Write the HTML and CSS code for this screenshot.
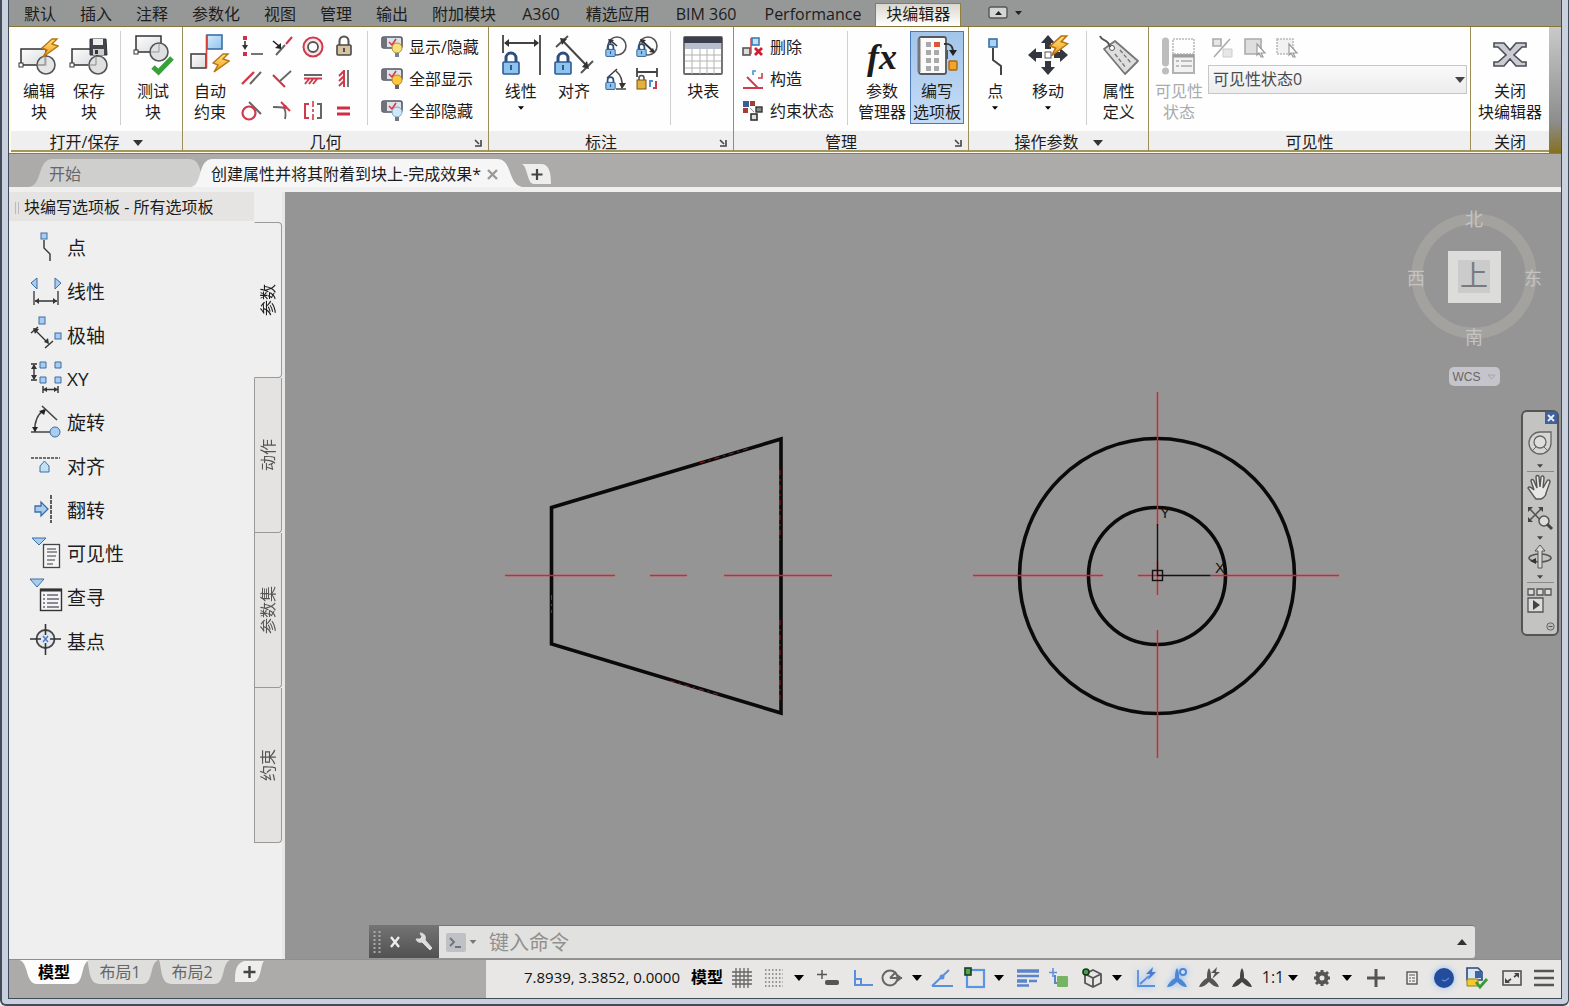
FILE: index.html
```html
<!DOCTYPE html>
<html lang="zh-CN">
<head>
<meta charset="utf-8">
<title>块编辑器</title>
<link rel="stylesheet" href="styles.css">
</head>
<body>
<svg class="defs" width="0" height="0" aria-hidden="true">
  <defs>
    <linearGradient id="gBolt" x1="0" y1="0" x2="0" y2="1"><stop offset="0" stop-color="#ffe27a"/><stop offset="1" stop-color="#f39a1e"/></linearGradient>
    <linearGradient id="gBox" x1="0" y1="0" x2="1" y2="1"><stop offset="0" stop-color="#fdfdfd"/><stop offset="1" stop-color="#d9dbde"/></linearGradient>
    <linearGradient id="gBlue" x1="0" y1="0" x2="1" y2="1"><stop offset="0" stop-color="#d5ecfb"/><stop offset="1" stop-color="#8fc3ee"/></linearGradient>
    <symbol id="bolt" viewBox="0 0 18 20"><path d="M11 1 1 10l5 2-4 7L17 8l-6-2 5-5z" fill="url(#gBolt)" stroke="#b87412" stroke-width="1.4"/></symbol>
    <symbol id="lock" viewBox="0 0 18 24"><path d="M4 12V7a5 5 0 0 1 10 0v5" fill="none" stroke="#2d4e7e" stroke-width="3"/><rect x="1" y="11" width="16" height="12" rx="1" fill="#8cc4ee" stroke="#2d5a94" stroke-width="1.6"/><path d="M9 14v5" stroke="#2d5a94" stroke-width="2"/></symbol>
    <symbol id="vis" viewBox="0 0 22 22"><rect x="1" y="1" width="20" height="11" rx="2" fill="#dfe2e8" stroke="#50555e" stroke-width="1.6"/><path d="M1 3a2 2 0 0 1 2-2h3v11H3a2 2 0 0 1-2-2z" fill="#6d727c"/><path d="m8 6 3 3 4-6" fill="none" stroke="#cf3c48" stroke-width="1.6"/></symbol>
    <symbol id="caret" viewBox="0 0 10 6"><path d="M0 0h10L5 6z"/></symbol>
    <symbol id="launch" viewBox="0 0 8 8"><path d="M1 1l4 4M7 1v6H1" fill="none" stroke="#444" stroke-width="1.6"/></symbol>
    <symbol id="person" viewBox="0 0 20 22"><path d="M10 1c2 3 2 6 2 10 4 2 7 6 8 9-4 0-7-2-10-5-3 3-6 5-10 5 1-3 4-7 8-9 0-4 0-7 2-10z"/></symbol>
  </defs>
</svg>

<div class="window">
<div class="app">

<nav class="menu">
  <button>默认</button><button>插入</button><button>注释</button><button>参数化</button><button>视图</button><button>管理</button><button>输出</button><button>附加模块</button><button class="latin">A360</button><button>精选应用</button><button class="latin">BIM 360</button><button class="latin">Performance</button><button class="active">块编辑器</button>
  <button class="collapse" aria-label="最小化功能区">
    <svg width="33" height="12" viewBox="0 0 33 12"><rect x="0" y="0" width="18" height="11" rx="2" fill="#d5d5d5" stroke="#555" stroke-width="1.4"/><path d="M6 8h7L9.500 4z" fill="#222"/><path d="M26 4h7l-3.500 4z" fill="#222"/></svg>
  </button>
</nav>

<div class="ribbon">
  <section class="panel p-open">
    <div class="body">
      <button class="big"><span class="pic"><svg width="44" height="44" viewBox="0 0 44 44"><rect x="4" y="14" width="25" height="16" fill="url(#gBox)" stroke="#333" stroke-width="1.5"/><rect x="2" y="28" width="4" height="4" fill="#fff" stroke="#333"/><circle cx="29" cy="30" r="9" fill="#dfe0e2" fill-opacity=".8" stroke="#555" stroke-width="1.6"/><path d="M28 21v9h-8" fill="none" stroke="#888"/><use href="#bolt" x="24" y="3" width="18" height="20"/></svg></span>编辑<br>块</button>
      <button class="big"><span class="pic"><svg width="44" height="44" viewBox="0 0 44 44"><rect x="5" y="14" width="25" height="16" fill="url(#gBox)" stroke="#333" stroke-width="1.5"/><rect x="3" y="28" width="4" height="4" fill="#fff" stroke="#333"/><circle cx="31" cy="30" r="9" fill="#dfe0e2" stroke="#555" stroke-width="1.6"/><path d="M29 21v9h-8" fill="none" stroke="#888"/><path d="M23 4h16l1 16H23z" fill="#42454d" stroke="#2e3138"/><rect x="26" y="4" width="10" height="6" fill="#eee"/><rect x="26" y="14" width="11" height="6" fill="#ccc"/><rect x="28" y="15" width="3" height="4" fill="#333"/></svg></span>保存<br>块</button>
      <i class="sep"></i>
      <button class="big"><span class="pic"><svg width="44" height="44" viewBox="0 0 44 44"><rect x="5" y="1" width="25" height="16" fill="url(#gBox)" stroke="#333" stroke-width="1.5"/><rect x="3" y="15" width="4" height="4" fill="#fff" stroke="#333"/><circle cx="28" cy="17" r="9" fill="#dfe0e2" stroke="#555" stroke-width="1.6"/><path d="m28 9v8h-8" fill="none" stroke="#999"/><path d="M22 32l5.500 5L41 23" fill="none" stroke="#36a13a" stroke-width="5"/></svg></span>测试<br>块</button>
    </div>
    <h2>打开/保存<svg class="more" width="10" height="6"><use href="#caret"/></svg></h2>
  </section>

  <section class="panel p-geo">
    <div class="body">
      <button class="big"><span class="pic"><svg width="44" height="44" viewBox="0 0 44 44"><rect x="3" y="19" width="15" height="14" fill="url(#gBox)" stroke="#444" stroke-width="1.6"/><rect x="19" y="0" width="15" height="14" fill="url(#gBlue)" stroke="#3c6ea5" stroke-width="1.6"/><path d="M18.500 0v33" stroke="#d2413a" stroke-width="1.6"/><use href="#bolt" x="24" y="18" width="18" height="20"/></svg></span>自动<br>约束</button>
      <div class="icons four">
        <button aria-label="重合"><svg width="24" height="24" viewBox="0 0 24 24"><path d="M4 1h4v4H4zM4 17h4v4H4z" fill="#d03048"/><path d="M12 19h12" stroke="#666" stroke-width="1.8"/><path d="M6 6v5" stroke="#333" stroke-width="1.6"/><path d="M3 10h6l-3 5z" fill="#333"/></svg></button>
        <button aria-label="共线"><svg width="24" height="24" viewBox="0 0 24 24"><path d="m6 20 9-10" stroke="#666" stroke-width="2"/><path d="m16 9 6-7" stroke="#d03048" stroke-width="2"/><path d="m3 6 6 5" stroke="#222" stroke-width="1.6"/><path d="m11 8v6l-6-1z" fill="#222"/></svg></button>
        <button aria-label="同心"><svg width="24" height="24" viewBox="0 0 24 24"><circle cx="12" cy="12" r="9.500" fill="#fbe6e8" stroke="#cf3b4b" stroke-width="2"/><circle cx="12" cy="12" r="5" fill="#fff" stroke="#555" stroke-width="1.8"/></svg></button>
        <button aria-label="固定"><svg width="24" height="24" viewBox="0 0 24 24"><path d="M7.500 10V6a4.500 4.500 0 0 1 9 0v4" fill="none" stroke="#555" stroke-width="2"/><rect x="5" y="10" width="14" height="10" rx="1" fill="#d7c3a0" stroke="#4a4a4a" stroke-width="1.6"/><path d="M12 13v4" stroke="#333" stroke-width="1.6"/></svg></button>
        <button aria-label="平行"><svg width="24" height="24" viewBox="0 0 24 24"><path d="M3 17 15 5" stroke="#cf3b4b" stroke-width="2.4"/><path d="M11 17 22 5" stroke="#666" stroke-width="2"/></svg></button>
        <button aria-label="垂直"><svg width="24" height="24" viewBox="0 0 24 24"><path d="m3 8 12 12" stroke="#cf3b4b" stroke-width="2.2"/><path d="M10 14 21 4" stroke="#666" stroke-width="1.8"/></svg></button>
        <button aria-label="水平"><svg width="24" height="24" viewBox="0 0 24 24"><path d="M3 8h18" stroke="#666" stroke-width="2"/><path d="M3 11.500h18M8 12l-4 5m8-5-4 5m8-5-4 5" stroke="#cf3b4b" stroke-width="2"/></svg></button>
        <button aria-label="竖直"><svg width="24" height="24" viewBox="0 0 24 24"><path d="M16 3v17" stroke="#666" stroke-width="1.8"/><path d="M12 3v17M12 4l-5 5m5 0-5 5m5 0-5 5" stroke="#cf3b4b" stroke-width="2"/></svg></button>
        <button aria-label="相切"><svg width="24" height="24" viewBox="0 0 24 24"><path d="m10 3 12 12" stroke="#666" stroke-width="2"/><circle cx="10" cy="14" r="6.500" fill="none" stroke="#cf3b4b" stroke-width="2.2"/></svg></button>
        <button aria-label="平滑"><svg width="24" height="24" viewBox="0 0 24 24"><path d="M3 8c4 0 8 0 11 1 2 3 2 6 1 11" fill="none" stroke="#666" stroke-width="1.8"/><path d="m11 3 9 9" stroke="#cf3b4b" stroke-width="2"/><circle cx="15" cy="8" r="2" fill="#cf3b4b"/></svg></button>
        <button aria-label="对称"><svg width="24" height="24" viewBox="0 0 24 24"><path d="M8 5H4v14h4" fill="none" stroke="#cf3b4b" stroke-width="2"/><path d="M16 5h4v14h-4" fill="none" stroke="#666" stroke-width="2"/><path d="M12 2v20" stroke="#cf3b4b" stroke-width="1.6" stroke-dasharray="6 2 3 2"/></svg></button>
        <button aria-label="相等"><svg width="24" height="24" viewBox="0 0 24 24"><path d="M5 9h13M5 15h13" stroke="#cf2f45" stroke-width="3"/></svg></button>
      </div>
      <i class="sep"></i>
      <div class="rows">
        <button><svg width="22" height="22" viewBox="0 0 22 22"><use href="#vis"/><circle cx="16" cy="12" r="5" fill="#f8e07c" stroke="#b09136"/><path d="M14 17h4v4h-4z" fill="#70839e"/></svg>显示/隐藏</button>
        <button><svg width="22" height="22" viewBox="0 0 22 22"><use href="#vis"/><circle cx="16" cy="12" r="5" fill="#fcc83c" stroke="#b9862a"/><path d="M14 17h4v4h-4z" fill="#666"/></svg>全部显示</button>
        <button><svg width="22" height="22" viewBox="0 0 22 22"><use href="#vis"/><circle cx="16" cy="12" r="5" fill="#cfe7f8" stroke="#7fa6c9"/><path d="M14 17h4v4h-4z" fill="#777"/></svg>全部隐藏</button>
      </div>
    </div>
    <h2 class="has-launch"><span>几何</span><button aria-label="约束设置"><svg width="8" height="8"><use href="#launch"/></svg></button></h2>
  </section>

  <section class="panel p-dim">
    <div class="body">
      <button class="big"><span class="pic"><svg width="44" height="44" viewBox="0 0 44 44"><path d="M4 0v18M41 0v40" stroke="#555" stroke-width="2"/><path d="M6 8h33" stroke="#444" stroke-width="2"/><path d="m5 8 5-4v8zM40 8l-5-4v8z" fill="#333"/><use href="#lock" x="3" y="16" width="18" height="24"/></svg></span>线性<svg class="drop" width="6" height="4"><use href="#caret" width="6" height="4"/></svg></button>
      <button class="big one-line"><span class="pic"><svg width="44" height="44" viewBox="0 0 44 44"><path d="M4 12 16 1M29 38l12-12" stroke="#555" stroke-width="2"/><path d="m10 5 25 26" stroke="#444" stroke-width="2"/><path d="m8 3 7 1-5 6zM37 34l-7-2 5-6z" fill="#333"/><use href="#lock" x="2" y="16" width="18" height="24"/></svg></span>对齐</button>
      <div class="icons two">
        <button aria-label="半径"><svg width="24" height="24" viewBox="0 0 24 24"><circle cx="13" cy="11" r="9" fill="none" stroke="#555" stroke-width="1.6"/><path d="m13 11-7-6" stroke="#333" stroke-width="1.6"/><path d="m4 4 6 1-4 4z" fill="#333"/><use href="#lock" x="1" y="8" width="11" height="14"/></svg></button>
        <button aria-label="直径"><svg width="24" height="24" viewBox="0 0 24 24"><circle cx="13" cy="11" r="9" fill="none" stroke="#555" stroke-width="1.6"/><path d="M6 5l13 12" stroke="#333" stroke-width="1.8"/><path d="m5 4 6 1-4 4zM20 18l-6-1 4-4z" fill="#333"/><use href="#lock" x="1" y="8" width="11" height="14"/></svg></button>
        <button aria-label="角度"><svg width="24" height="24" viewBox="0 0 24 24"><path d="m3 11 10-9M12 22h10M12 4c5 4 7 9 6 17" fill="none" stroke="#444" stroke-width="1.6"/><path d="m15 16h7l-4 6z" fill="#333"/><use href="#lock" x="1" y="9" width="11" height="14"/></svg></button>
        <button aria-label="转换"><svg width="24" height="24" viewBox="0 0 24 24"><path d="M2 1v9M22 1v9M2 5h20" stroke="#444" stroke-width="1.8"/><path d="M4 13v-2a2.500 2.500 0 0 1 5 0v2" fill="none" stroke="#555" stroke-width="1.6"/><rect x="2" y="13" width="9" height="9" fill="#e3b13c" stroke="#775715"/><path d="M15 20v-6h3" fill="none" stroke="#4b90d0" stroke-width="2"/><path d="M18 21h3v-7" fill="none" stroke="#cf3b4b" stroke-width="2"/></svg></button>
      </div>
      <i class="sep"></i>
      <button class="big one-line"><span class="pic"><svg width="44" height="44" viewBox="0 0 44 44"><rect x="3" y="2" width="38" height="37" rx="1" fill="#fff" stroke="#686868" stroke-width="1.8"/><path d="M3 2h38v6H3z" fill="#3b3f4d"/><path d="M4 8h36v6H4z" fill="#b7bfcc"/><path d="M11 14v25m8-25v25m7-25v25m7-25v25M4 20h36M4 26h36M4 33h36" stroke="#b3b3b3"/></svg></span>块表</button>
    </div>
    <h2 class="has-launch"><span>标注</span><button aria-label="标注设置"><svg width="8" height="8"><use href="#launch"/></svg></button></h2>
  </section>

  <section class="panel p-manage">
    <div class="body">
      <div class="rows">
        <button><svg width="22" height="22" viewBox="0 0 22 22"><rect x="1" y="12" width="7" height="7" fill="#ddd" stroke="#555" stroke-width="1.6"/><rect x="10" y="2" width="7" height="7" fill="#bfe0f5" stroke="#3c7fb5" stroke-width="1.6"/><path d="M9 2v16" stroke="#cf3b4b" stroke-width="1.4"/><path d="m13 12 7 7m0-7-7 7" stroke="#cc1f30" stroke-width="2.800"/></svg>删除</button>
        <button><svg width="22" height="22" viewBox="0 0 22 22"><path d="M1 20h20M5 9l11 11" stroke="#cf3b4b" stroke-width="1.8"/><path d="M11 7V3h3" fill="none" stroke="#4b90d0" stroke-width="1.6"/><path d="M16 10h4V5" fill="none" stroke="#cf3b4b" stroke-width="1.6"/></svg>构造</button>
        <button><svg width="22" height="22" viewBox="0 0 22 22"><path d="M1 1h6v6H1z" fill="#3a5d96"/><path d="M8 1h5v5H8zM1 8h5v5H1z" fill="#a04035"/><path d="M8 8l4 4" stroke="#999"/><rect x="14" y="7" width="6" height="5" fill="#888" stroke="#333" stroke-width="1.4"/><rect x="9" y="14" width="6" height="6" fill="#ddd" stroke="#333" stroke-width="1.6"/></svg>约束状态</button>
      </div>
      <i class="sep"></i>
      <button class="big"><span class="pic fx">fx</span>参数<br>管理器</button>
      <button class="big selected"><span class="pic"><svg width="44" height="44" viewBox="0 0 44 44"><path d="M30 15h3v9h-3" fill="#555"/><rect x="4" y="2" width="27" height="37" rx="2" fill="#fafafa" stroke="#55585e" stroke-width="1.8"/><path d="M4 4v33" stroke="#777" stroke-width="3"/><path d="M11 7h5v5h-5zM11 15h5v5h-5zM11 23h5v5h-5zM11 31h5v5h-5zM19 15h5v5h-5zM19 23h5v5h-5zM19 31h5v5h-5z" fill="#a9a9a9"/><path d="M19 7h6v5h-6z" fill="#d9583a"/><path d="M29 9c6-1 9 2 9 8" fill="none" stroke="#333" stroke-width="1.8"/><path d="m34 15h8l-4 6z" fill="#222"/><rect x="34" y="26" width="8" height="9" rx="1" fill="#f2a52c" stroke="#a8690d" stroke-width="1.4"/></svg></span>编写<br>选项板</button>
    </div>
    <h2 class="has-launch"><span>管理</span><button aria-label="管理设置"><svg width="8" height="8"><use href="#launch"/></svg></button></h2>
  </section>

  <section class="panel p-action">
    <div class="body">
      <button class="big"><span class="pic"><svg width="44" height="44" viewBox="0 0 44 44"><rect x="16" y="4" width="8" height="8" fill="#a9d3f3" stroke="#3970a8" stroke-width="1.6"/><path d="M20 13v12l8 6v9" fill="none" stroke="#444" stroke-width="2"/></svg></span>点<svg class="drop" width="6" height="4"><use href="#caret" width="6" height="4"/></svg></button>
      <button class="big"><span class="pic"><svg width="44" height="44" viewBox="0 0 44 44"><path d="m22 0 7 8h-4v6h-6V8h-4zM22 40l7-8h-4v-6h-6v6h-4zM2 20l8-7v4h6v6h-6v4zM42 20l-8-7v4h-6v6h6v4z" fill="#33363f"/><rect x="19" y="17" width="6" height="6" fill="#fff" stroke="#555"/><use href="#bolt" x="23" y="0" width="20" height="22"/></svg></span>移动<svg class="drop" width="6" height="4"><use href="#caret" width="6" height="4"/></svg></button>
      <i class="sep"></i>
      <button class="big"><span class="pic"><svg width="44" height="44" viewBox="0 0 44 44"><path d="M7 14 18 6l23 20-13 13-16-19z" fill="#dedede" stroke="#777" stroke-width="1.8" stroke-linejoin="round"/><path d="m18 19 11 14m-6-18 11 13" stroke="#777" stroke-width="1.4" stroke-dasharray="4 2"/><circle cx="15" cy="13" r="2.500" fill="#fff" stroke="#555"/><path d="M3 1c2 6 8 2 10 11" fill="none" stroke="#555" stroke-width="2"/></svg></span>属性<br>定义</button>
    </div>
    <h2>操作参数<svg class="more" width="10" height="6"><use href="#caret"/></svg></h2>
  </section>

  <section class="panel p-vis">
    <div class="body">
      <button class="big" disabled><span class="pic"><svg width="44" height="44" viewBox="0 0 44 44"><path d="M5 6a3 3 0 0 1 7 0v22a3 3 0 0 1-7 0z" fill="#bdbdbd"/><circle cx="8.500" cy="36" r="3.500" fill="#bdbdbd"/><rect x="16" y="4" width="21" height="15" fill="none" stroke="#bbb" stroke-width="1.6" stroke-dasharray="2 1"/><rect x="16" y="20" width="21" height="18" fill="#f2f2f2" stroke="#b2b2b2" stroke-width="2"/><path d="M16 21h21" stroke="#9d9d9d" stroke-width="3"/><path d="M19 26h3m2 0h11M19 31h3m2 0h11" stroke="#aaa" stroke-width="1.6"/></svg></span>可见性<br>状态</button>
      <div class="state">
        <div class="state-tools">
          <button disabled aria-label="可见性模式"><svg width="22" height="22" viewBox="0 0 22 22"><path d="M2 2h8v7H2z" fill="#e6e6e6" stroke="#aaa" stroke-width="1.6"/><path d="M3 20 19 2" stroke="#aaa" stroke-width="1.6"/><path d="M12 12h9v8h-9z" fill="#e6e6e6" stroke="#ccc"/></svg></button>
          <button disabled aria-label="使可见"><svg width="22" height="22" viewBox="0 0 22 22"><path d="M2 2h16v15H2z" fill="#dedede" stroke="#aaa" stroke-width="1.6"/><path d="m14 7 8 9h-4l2 4h-2l-2-4-2 2z" fill="#fff" stroke="#999" stroke-width="1.2"/></svg></button>
          <button disabled aria-label="使不可见"><svg width="22" height="22" viewBox="0 0 22 22"><path d="M2 2h16v15H2z" fill="#f2f2f2" stroke="#bbb" stroke-width="1.6" stroke-dasharray="2 1"/><path d="m14 7 8 9h-4l2 4h-2l-2-4-2 2z" fill="#fff" stroke="#999" stroke-width="1.2"/></svg></button>
        </div>
        <div class="combo"><select aria-label="可见性状态"><option>可见性状态0</option></select><svg width="10" height="6"><use href="#caret"/></svg></div>
      </div>
    </div>
    <h2>可见性</h2>
  </section>

  <section class="panel p-close">
    <div class="body">
      <button class="big"><span class="pic"><svg width="44" height="44" viewBox="0 0 44 44"><path d="M6 8h10l6 7 6-7h10v4h-4l-8 8 8 7h4v4H28l-6-7-6 7H6v-4h4l8-7-8-8H6z" fill="#c9ccd2" stroke="#4b4e55" stroke-width="1.6"/></svg></span>关闭<br>块编辑器</button>
    </div>
    <h2>关闭</h2>
  </section>
  <div class="ribbon-end"></div>
</div>

<div class="docs">
  <button class="doc"><svg class="shape" viewBox="0 0 178 28" preserveAspectRatio="none"><path d="M0 28C14 26 8 0 24 0h136c14 0 10 20 18 28z" fill="#cfcfcd"/></svg><span>开始</span></button>
  <button class="doc current"><svg class="shape" viewBox="0 0 332 28" preserveAspectRatio="none"><path d="M0 28C12 26 6 0 22 0h284c16 0 10 26 26 28z" fill="#f6f6f6"/></svg><span>创建属性并将其附着到块上-完成效果*</span><svg class="x" width="11" height="11" viewBox="0 0 11 11"><path d="m1 1 9 9m0-9-9 9" stroke="#999" stroke-width="2.4"/></svg></button>
  <button class="doc-add" aria-label="新图形"><svg width="30" height="22" viewBox="0 0 30 22"><path d="M0 1h19c8 0 10 8 10 20H12C5 21 6 4 0 1z" fill="#eeeeec"/><path d="M15 6v11M9.500 11.500h11" stroke="#444" stroke-width="2.2"/></svg></button>
</div>

<main class="work">
  <aside class="palette">
    <div class="palette-main">
      <h1><svg width="4" height="12" viewBox="0 0 4 12"><path d="M.5 0v12M3.500 0v12" stroke="#bbb"/></svg>块编写选项板 - 所有选项板</h1>
      <div class="params">
        <button><svg width="32" height="32" viewBox="0 0 32 32"><rect x="11" y="0" width="6" height="6" fill="#a8cdef" stroke="#3c6da5"/><path d="M14 7v8l6 6v7" fill="none" stroke="#333" stroke-width="1.4"/></svg>点</button>
        <button><svg width="32" height="32" viewBox="0 0 32 32"><path d="m7 1-6 5 6 6zM25 1l6 5-6 6z" fill="#a8cdef" stroke="#3c6da5"/><path d="M4 14v14M28 14v14M5 24h22" stroke="#333" stroke-width="1.3"/><path d="m5 24 4-3v6zM27 24l-4-3v6z" fill="#333"/></svg>线性</button>
        <button><svg width="32" height="32" viewBox="0 0 32 32"><rect x="9" y="-3" width="6" height="7" fill="#a8cdef" stroke="#3c6da5"/><rect x="25" y="13" width="6" height="6" fill="#a8cdef" stroke="#3c6da5"/><path d="m1 13 7-6m7 21 8-7M4 9l14 14" stroke="#333" stroke-width="1.4"/><path d="m3 8 6 1-4 5zM19 24l-5-2 4-4z" fill="#333"/></svg>极轴</button>
        <button><svg width="32" height="32" viewBox="0 0 32 32"><path d="M10-2h6v6h-6zM25-2h6v6h-6zM10 13h6v6h-6zM25 13h6v6h-6z" fill="#a8cdef" stroke="#3c6da5"/><path d="M1 0h6M1 16h6M4 1v14M13 22v7M28 22v7M13 25.500h15" stroke="#333" stroke-width="1.4"/><path d="m4 0 3 5H1zM4 16l-3-5h6zM13 25.500l4-2.500v5zM28 25.500l-4-2.500v5z" fill="#333"/></svg>XY</button>
        <button><svg width="32" height="32" viewBox="0 0 32 32"><path d="M1 24h20M12-2l15 14M5 24C4 14 8 6 14 2" fill="none" stroke="#444" stroke-width="1.6"/><path d="m9 3 7-2-2 6zM2 19l6 0-3 5z" fill="#222"/><circle cx="25" cy="24" r="5" fill="#a8cdef" stroke="#3c6da5"/></svg>旋转</button>
        <button><svg width="32" height="32" viewBox="0 0 32 32"><path d="M1 7h29" stroke="#444" stroke-width="1.4" stroke-dasharray="3 1"/><path d="M10 21v-6l4.500-5 4.500 5v6z" fill="#bfe0f5" stroke="#3c6da5"/></svg>对齐</button>
        <button><svg width="32" height="32" viewBox="0 0 32 32"><path d="M21 0v28" stroke="#222" stroke-width="1.4" stroke-dasharray="4 1"/><path d="M5 11h6V7l7 7-7 7v-4H5z" fill="#a8cdef" stroke="#3c6da5" stroke-width="1.3"/></svg>翻转</button>
        <button><svg width="32" height="32" viewBox="0 0 32 32"><path d="M2-1h14l-7 7z" fill="#a8cdef" stroke="#3c6da5"/><rect x="13.500" y="5.500" width="16" height="23" fill="#f4f4f6" stroke="#444" stroke-width="1.3"/><path d="M17 10h9m-9 3h10m-10 4h9m-9 4h8m-8 4h6" stroke="#777" stroke-width="1.3"/></svg>可见性</button>
        <button><svg width="32" height="32" viewBox="0 0 32 32"><path d="M0-3h14l-7 8z" fill="#a8cdef" stroke="#3c6da5"/><rect x="10.500" y="7.500" width="21" height="21" fill="#f4f4f6" stroke="#333" stroke-width="1.4"/><path d="M10 8h22" stroke="#333" stroke-width="3"/><path d="M13 13h2m2 0h11m-15 4h2m2 0h12m-16 4h2m2 0h11m-15 4h2m2 0h12" stroke="#667" stroke-width="1.4"/></svg>查寻</button>
        <button><svg width="32" height="32" viewBox="0 0 32 32"><circle cx="15.500" cy="13" r="9" fill="#e4e8ee" stroke="#444" stroke-width="1.8"/><path d="M0 13h11m9 0h11M15.500-2v11m0 8v12" stroke="#333" stroke-width="1.6"/><path d="m13 10 5 6m0-6-5 6" stroke="#447bc0" stroke-width="1.4"/></svg>基点</button>
      </div>
    </div>
    <div class="side-tabs">
      <button class="on"><span>参数</span></button><button><span>动作</span></button><button><span>参数集</span></button><button><span>约束</span></button>
    </div>
  </aside>

  <div class="canvas">
    <svg class="drawing" viewBox="285 192 1276 767" aria-label="块几何图形">
      <g fill="none" stroke="#0a0a0a" stroke-width="3.6">
        <path d="M551.500 507.500 781 439V713L551.500 644z"/>
        <circle cx="1157" cy="576" r="137.500"/>
        <circle cx="1157" cy="576" r="68.500"/>
      </g>
      <g stroke="#e0202c" stroke-width="1.400">
        <path d="M505 575.500h110M650 575.500h37M724 575.500h108M973 575.500h130M1138 575.500h21M1211 575.500h128M1157.500 392v133M1157.500 561v34M1157.500 630v128"/>
        <path d="M551.500 595v18M780 470v70M780 620v80M700 463l50-15M670 681l50 14" stroke-width="1" stroke-dasharray="5 4 2 4" stroke-opacity=".7"/>
      </g>
      <g fill="none" stroke="#111" stroke-width="1.400"><path d="M1157.500 524v51.500h53"/><rect x="1152.500" y="570.500" width="10" height="10"/></g>
      <text x="1160" y="518" class="axis">Y</text><text x="1215" y="573" class="axis">X</text>
    </svg>

    <div class="cube">
      <svg width="140" height="140" viewBox="0 0 140 140">
        <circle cx="70" cy="70" r="57" fill="none" stroke="#a3a29f" stroke-width="11"/>
        <rect x="44" y="45" width="53" height="52" fill="#dcdcdb"/><rect x="54" y="54" width="32" height="33" fill="#cbcbcb"/>
        <text x="70" y="80" class="top">上</text>
        <text x="70" y="20">北</text><text x="70" y="138">南</text><text x="12" y="79">西</text><text x="129" y="79">东</text>
      </svg>
      <button class="wcs">WCS<svg width="9" height="6" viewBox="0 0 9 6"><path d="M1 1h7L4.500 5z" fill="none" stroke="#a4a2ae"/></svg></button>
    </div>

    <div class="navbar">
      <button class="nav-close" aria-label="关闭导航栏"><svg width="12" height="12" viewBox="0 0 12 12"><path d="M0 0h12v12H0z" fill="#41619c"/><path d="m3 3 6 6m0-6-6 6" stroke="#e8eefa" stroke-width="1.8"/></svg></button>
      <button class="wheel" aria-label="导航控制盘"><svg width="24" height="24" viewBox="0 0 24 24"><path d="M12 1h11v11A11 11 0 1 1 12 1z" fill="#d6d6d4" stroke="#666" stroke-width="1.300"/><circle cx="12" cy="11" r="6" fill="#dedede" stroke="#666" stroke-width="1.300"/><path d="m8 16-4 4m12-4 4 4" stroke="#666"/></svg></button>
      <svg class="nc" width="6" height="4"><use href="#caret" width="6" height="4"/></svg>
      <hr>
      <button aria-label="平移"><svg width="24" height="26" viewBox="0 0 24 26"><path d="M8 24C5 21 3 17 0 13c1-2 3-1 6 2L3 6c0-2 2-2 3 0l3 7-1-11c0-2 3-2 3 0l1 10 1-10c1-2 3-1 3 1l-1 10 4-7c1-2 3-1 3 1l-4 11c0 3-3 5-5 6z" fill="#e7e7e5" stroke="#555" stroke-width="1.400"/></svg></button>
      <button aria-label="缩放"><svg width="26" height="24" viewBox="0 0 26 24"><path d="M2 2l13 14M15 2 2 15" stroke="#555" stroke-width="1.600"/><path d="M1 1h5L1 6zM16 1h-5l5 5zM1 16v-5l5 5z" fill="#444"/><circle cx="17" cy="15" r="5" fill="#ddd" stroke="#555" stroke-width="1.500"/><path d="m20 18 5 5" stroke="#444" stroke-width="3"/></svg></button>
      <svg class="nc" width="6" height="4"><use href="#caret" width="6" height="4"/></svg>
      <button aria-label="动态观察"><svg width="24" height="24" viewBox="0 0 24 24"><ellipse cx="12" cy="13" rx="11" ry="4" fill="none" stroke="#555" stroke-width="1.600"/><path d="M10 23V6H7l5-6 5 6h-3v17z" fill="#d8d8d8" stroke="#555"/><path d="m2 16 6-3v6z" fill="#333"/></svg></button>
      <svg class="nc" width="6" height="4"><use href="#caret" width="6" height="4"/></svg>
      <hr>
      <button class="motion" aria-label="ShowMotion"><svg width="26" height="26" viewBox="0 0 26 26"><path d="M1 1h6v6H1zM10 1h6v6h-6zM18 1h6v6h-6zM1 10h15v14H1z" fill="#dcdcdc" stroke="#555" stroke-width="1.300"/><path d="m6 12 7 5-7 5z" fill="#444"/></svg></button>
      <button class="nav-opt" aria-label="自定义"><svg width="9" height="9" viewBox="0 0 9 9"><circle cx="4.500" cy="4.500" r="3.700" fill="#bbb" stroke="#666"/><path d="M2.500 4.500h4" stroke="#555"/></svg></button>
    </div>

    <div class="command">
      <div class="cmd-tools">
        <svg width="8" height="22" viewBox="0 0 8 22"><path d="M1.500 0v22M6.500 0v22" stroke="#aaa" stroke-width="2" stroke-dasharray="2 2"/></svg>
        <button aria-label="关闭命令行"><svg width="10" height="12" viewBox="0 0 10 12"><path d="m1 1 8 10m0-10-8 10" stroke="#eee" stroke-width="2.400"/></svg></button>
        <button class="wrench" aria-label="自定义命令行"><svg width="20" height="20" viewBox="0 0 20 20"><path d="M2 7a5 5 0 0 0 6 3l8 8 2-2-7-8a5 5 0 0 0-5-7l2 4-2 2z" fill="#ddd" stroke="#ddd"/></svg></button>
      </div>
      <label class="cmd-field">
        <svg width="20" height="19" viewBox="0 0 20 19"><rect width="20" height="19" rx="2" fill="#bfc1c6"/><path d="m4 5 4 4-4 4m5 1h6" fill="none" stroke="#70737b" stroke-width="1.800"/></svg>
        <svg class="cc" width="8" height="4"><use href="#caret" width="8" height="4"/></svg>
        <input type="text" placeholder="键入命令" aria-label="命令">
        <svg width="10" height="6" viewBox="0 0 10 6"><path d="M0 6h10L5 0z" fill="#333"/></svg>
      </label>
    </div>
  </div>
</main>

<footer class="bottom">
  <div class="layouts">
    <button class="on"><svg class="shape" viewBox="0 0 70 24" preserveAspectRatio="none"><path d="M0 0h70c-9 4-4 24-16 24H18C6 24 10 2 0 0z" fill="#fdfdfd"/></svg><span>模型</span></button>
    <button><svg class="shape" viewBox="0 0 76 24" preserveAspectRatio="none"><path d="M5 0h71c-9 4-4 24-16 24H18C6 24 8 8 5 0z" fill="#dededc"/></svg><span>布局1</span></button>
    <button><svg class="shape" viewBox="0 0 76 24" preserveAspectRatio="none"><path d="M5 0h71c-9 4-4 24-16 24H18C6 24 8 8 5 0z" fill="#dededc"/></svg><span>布局2</span></button>
    <button class="add" aria-label="新布局"><svg width="30" height="22" viewBox="0 0 30 22"><path d="M10 0h20c-4 4-2 21-12 21H1C1 12 1 3 10 0z" fill="#eeeeec"/><path d="M15.500 5v12M9.500 11h12" stroke="#444" stroke-width="2.400"/></svg></button>
  </div>
  <div class="status">
    <span class="coords">7.8939, 3.3852, 0.0000</span>
    <button class="model">模型</button>
    <button class="t" aria-label="栅格"><svg width="20" height="20" viewBox="0 0 20 20"><path d="M4 0v20M8 0v20M12 0v20M16 0v20M0 4h20M0 8h20M0 12h20M0 16h20" stroke="#666" stroke-width="1.300"/></svg></button>
    <button class="t g4" aria-label="捕捉"><svg width="20" height="20" viewBox="0 0 20 20"><path d="M1 2h18M1 6h18M1 10h18M1 14h18M1 18h18" stroke="#777" stroke-width="1.300" stroke-dasharray="1.500 2"/></svg></button>
    <button class="c" aria-label="捕捉选项"><svg width="10" height="6"><use href="#caret"/></svg></button>
    <button class="t g4" aria-label="动态输入"><svg width="22" height="20" viewBox="0 0 22 20"><path d="M5 2v9M0 6.500h10" stroke="#555" stroke-width="1.500"/><rect x="8" y="12" width="14" height="5" rx="2" fill="#555"/></svg></button>
    <button class="t g8" aria-label="正交"><svg width="20" height="20" viewBox="0 0 20 20"><path d="M1 2v15h18M1 11h6v6" fill="none" stroke="#5a8fdc" stroke-width="2"/></svg></button>
    <button class="t" aria-label="极轴追踪"><svg width="20" height="20" viewBox="0 0 20 20"><circle cx="8" cy="10" r="7.500" fill="none" stroke="#666" stroke-width="2"/><path d="M8 10h12M8 10l6-6M15 7l4 3-4 3" fill="none" stroke="#666" stroke-width="1.800"/></svg></button>
    <button class="c" aria-label="极轴选项"><svg width="10" height="6"><use href="#caret"/></svg></button>
    <button class="t" aria-label="对象追踪"><svg width="22" height="20" viewBox="0 0 22 20"><path d="M1 18 18 2M1 18h21" stroke="#5a8fdc" stroke-width="2"/><circle cx="11" cy="9" r="2.500" fill="#5a8fdc"/></svg></button>
    <button class="t g4" aria-label="对象捕捉"><svg width="22" height="22" viewBox="0 0 22 22"><rect x="4" y="3" width="17" height="17" fill="none" stroke="#5a95e5" stroke-width="2.200"/><rect x="2" y="1" width="6" height="7" fill="#53a353" stroke="#153f1c" stroke-width="1.600"/></svg></button>
    <button class="c" aria-label="捕捉设置"><svg width="10" height="6"><use href="#caret"/></svg></button>
    <button class="t g4" aria-label="线宽"><svg width="22" height="20" viewBox="0 0 22 20"><path d="M0 3h22M0 13h10" stroke="#5a85c9" stroke-width="3.500"/><path d="M0 8h14M12 8h10M12 13h8M0 17.500h12" stroke="#5a85c9" stroke-width="2.400"/></svg></button>
    <button class="t g4" aria-label="选择循环"><svg width="22" height="20" viewBox="0 0 22 20"><path d="M4 0v9M0 4.500h8" stroke="#5a8fdc" stroke-width="1.500"/><path d="M6 7v8h3" fill="none" stroke="#5a85c9" stroke-width="2"/><rect x="8" y="8" width="11" height="11" rx="1" fill="#76b464"/></svg></button>
    <button class="t g4" aria-label="三维捕捉"><svg width="22" height="22" viewBox="0 0 22 22"><path d="m12 3 8 4v9l-8 4-8-4V7zM4 7l8 4 8-4M12 11v9" fill="none" stroke="#555" stroke-width="1.800"/><circle cx="5" cy="5" r="3" fill="#4b9b50" stroke="#123d1a" stroke-width="1.600"/></svg></button>
    <button class="c" aria-label="三维捕捉设置"><svg width="10" height="6"><use href="#caret"/></svg></button>
    <button class="t g4 glow" aria-label="动态 UCS"><svg width="22" height="22" viewBox="0 0 22 22"><path d="M3 3v16h17M5 17 14 9" fill="none" stroke="#5a8fdc" stroke-width="1.800"/><path d="m18 0-7 7h4l-2 6 8-8h-4z" fill="#4b7bc9"/></svg></button>
    <button class="t g4 glow" aria-label="注释可见性"><svg width="22" height="22" viewBox="0 0 22 22"><use href="#person" width="20" height="22" fill="#4e86d4"/><circle cx="16" cy="5" r="3" fill="#cfe2fb" stroke="#4e86d4" stroke-width="2"/></svg></button>
    <button class="t g4" aria-label="自动缩放"><svg width="22" height="22" viewBox="0 0 22 22"><use href="#person" width="20" height="22" fill="#555"/><path d="m18 0-6 6h4l-3 6 8-7h-4z" fill="#555"/></svg></button>
    <button class="t g4" aria-label="注释比例"><svg width="20" height="22" viewBox="0 0 20 22"><use href="#person" width="20" height="22" fill="#444"/></svg></button>
    <button class="scale">1:1<svg width="10" height="6"><use href="#caret"/></svg></button>
    <button class="t g4" aria-label="工作空间"><svg width="18" height="18" viewBox="0 0 18 18"><circle cx="9" cy="9" r="4.500" fill="none" stroke="#555" stroke-width="4"/><path d="M9 1v3m0 10v3M1 9h3m10 0h3M3 3l2 2m8 8 2 2M15 3l-2 2M5 13l-2 2" stroke="#555" stroke-width="3"/></svg></button>
    <button class="c" aria-label="工作空间选项"><svg width="10" height="6"><use href="#caret"/></svg></button>
    <button class="t g4" aria-label="注释监视器"><svg width="20" height="20" viewBox="0 0 20 20"><path d="M10 1v18M1 10h18" stroke="#555" stroke-width="3"/></svg></button>
    <button class="t g8" aria-label="快捷特性"><svg width="12" height="14" viewBox="0 0 12 14"><rect x="1" y="1" width="10" height="12" fill="#eee" stroke="#555" stroke-width="1.400"/><path d="M3 4h6M3 7h2m1 0h3M3 10h2m1 0h3" stroke="#555"/></svg></button>
    <button class="t g4" aria-label="硬件加速"><svg class="halo" width="22" height="22" viewBox="0 0 22 22"><circle cx="11" cy="11" r="10" fill="#234c9c"/><path d="m9 13 3 1 4-3" fill="none" stroke="#5b86d4" stroke-width="1.500"/></svg></button>
    <button class="t g4" aria-label="隔离对象"><svg width="22" height="22" viewBox="0 0 22 22"><path d="M2 1h11l4 4v8H2z" fill="#d8e6f4" stroke="#2b4a78" stroke-width="1.600"/><path d="M10 4h6v7h-6z" fill="#3c64a8"/><path d="M2 12h11v7H2z" fill="#f2cc2e" stroke="#9b7d12"/><path d="m11 15 4 5 7-8" fill="none" stroke="#3a9b35" stroke-width="2.800"/></svg></button>
    <button class="t g8" aria-label="全屏"><svg width="20" height="18" viewBox="0 0 20 18"><rect x="1" y="2" width="18" height="14" fill="none" stroke="#555" stroke-width="1.600"/><path d="m12 8 4-3M9 10l-4 3" stroke="#444" stroke-width="1.600"/><path d="M12 4h5v5zM3 14v-5l5 5z" fill="#444"/></svg></button>
    <button class="t g4" aria-label="自定义"><svg width="20" height="18" viewBox="0 0 20 18"><path d="M0 2h20M0 9h20M0 16h20" stroke="#555" stroke-width="2.400"/></svg></button>
  </div>
</footer>

</div>
</div>
</body>
</html>
```
FILE: styles.css
```css
* { box-sizing: border-box; }

body {
  margin: 0;
  background: #e9edf2;
  color: #1c1c1c;
  font: 16px/21px "Open Sans", "Noto Sans CJK SC", sans-serif;
}

button, input, select { font: inherit; color: inherit; }
button {
  display: flex;
  align-items: center;
  justify-content: center;
  margin: 0;
  padding: 0;
  border: 0;
  background: none;
  white-space: nowrap;
}
svg { display: block; flex: none; overflow: visible; }
.defs { position: absolute; }
h1, h2 { margin: 0; font-size: 16px; font-weight: 400; }

/* Window frame */
.window {
  display: flex;
  min-height: 100vh;
  padding: 0 6px 5px;
  border: solid #454c59;
  border-width: 0 1px 2px 2px;
  border-radius: 0 0 6px 6px;
  background: #c8d1dd;
}
.app {
  display: flex;
  flex: 1;
  flex-direction: column;
  min-width: 0;
  border: solid #3f4a5a;
  border-width: 0 1px 1px;
  background: #acaba9;
}

/* Menu */
.menu {
  display: flex;
  height: 26px;
  padding-left: 3px;
  background: #969897;
}
.menu button { padding: 2px 12px 0; }
.menu .latin { padding: 2px 14px 0; }
.menu .active {
  margin: 3px 0 0;
  padding: 0 10px 2px;
  border: solid #8f803c;
  border-width: 1px 1px 0;
  background: linear-gradient(#d9d7cd, #fff);
}
.menu .collapse { padding: 0 28px; }

/* Ribbon */
.ribbon {
  display: flex;
  height: 128px;
  padding-left: 2px;
  padding-bottom: 1px;
  border-top: 1px solid #857738;
  border-bottom: 1px solid #8e7d3b;
  background: #fffbe6;
}
.panel {
  display: flex;
  flex: none;
  flex-direction: column;
  border-right: 1px solid #9c8e58;
}
.p-open { width: 172px; }
.p-geo { width: 306px; }
.p-dim { width: 245px; }
.p-manage { width: 235px; }
.p-action { width: 180px; }
.p-vis { flex: 1; }
.p-close { width: 78px; border-right: 0; }
.ribbon-end {
  width: 12px;
  margin-bottom: -1px;
  background: linear-gradient(#c9c9c9, #8d8d8d 75%, #857021);
}
.panel .body {
  display: flex;
  flex: 1;
  align-items: flex-start;
  padding: 4px 3px 0;
  background: #fefefe;
}
.panel h2 {
  display: flex;
  align-items: center;
  justify-content: center;
  height: 21px;
  padding-top: 4px;
  border-bottom: 2px solid #a39660;
  background: #efefef;
}
.panel h2 .more { margin-left: 14px; fill: #333; }
.has-launch span { flex: 1; text-align: center; }
.has-launch button { width: 20px; }

.big {
  display: block;
  width: 50px;
  height: 93px;
  border: 1px solid transparent;
  text-align: center;
}
.big:disabled { color: #aaa; }
.big .pic { display: grid; place-items: center; height: 48px; }
.big .drop { margin: 4px auto 13px; }
.big.one-line { padding-bottom: 21px; }
.big.selected {
  width: 54px;
  margin-left: 3px;
  border-color: #4a78b8;
  background: linear-gradient(#a3c5ea, #c4dcf6);
}
.fx { font: italic bold 36px/44px "Liberation Serif", serif; }
.sep { width: 1px; height: 94px; background: #cfcfcf; }

.icons { display: grid; }
.four { grid-template: repeat(3, 32px) / repeat(4, 31px); }
.two { grid-template: repeat(2, 32px) / repeat(2, 31px); }
.rows { display: grid; grid-auto-rows: 32px; }
.rows button { justify-content: flex-start; gap: 6px; }

.p-open .sep { margin: 0 7px 0 6px; }
.p-geo .body { padding-left: 2px; }
.p-geo .sep { margin: 0 13px 0 8px; }
.p-dim .body { padding-left: 5px; }
.p-dim .big { width: 56px; }
.p-dim .sep { margin: 0 6px 0 7px; }
.p-manage .body { padding-left: 8px; }
.p-manage .sep { margin: 0 9px 0 13px; }
.p-action .big { width: 54px; }
.p-action .body { padding-left: 0; }
.p-action .sep { margin: 0 5px 0 12px; }
.p-vis .body { padding-left: 5px; }
.p-close .big { width: 72px; }

.state { flex: 1; padding-left: 4px; }
.state-tools { display: flex; gap: 10px; height: 34px; padding-left: 3px; }
.combo { display: grid; align-items: center; }
.combo select, .combo svg { grid-area: 1 / 1; }
.combo svg { justify-self: end; margin-right: 2px; fill: #444; pointer-events: none; }
.combo select {
  width: 100%;
  height: 29px;
  padding: 0 4px;
  border: 1px solid #c6c6c6;
  border-radius: 0;
  background: linear-gradient(#fafafa, #ececec);
  color: #4a4a4a;
  appearance: none;
}

/* Document tabs */
.docs {
  display: flex;
  align-items: flex-end;
  height: 38px;
  padding-left: 20px;
  border-bottom: 5px solid #efefef;
}
.shape { position: absolute; inset: 0; width: 100%; height: 100%; }
.doc {
  position: relative;
  justify-content: flex-start;
  width: 178px;
  height: 28px;
  padding: 2px 0 0 20px;
  color: #666;
}
.doc span { position: relative; }
.doc .x { position: relative; margin-left: 6px; }
.doc.current {
  width: 332px;
  margin-left: -16px;
  color: #1c1c1c;
}
.doc-add { margin: 0 0 2px -1px; }

/* Work area */
.work { display: flex; flex: 1; }
.palette {
  display: flex;
  width: 276px;
  border-right: 3px solid #e7e7e7;
  background: #efefef;
}
.palette-main { flex: 1; }
.palette h1 {
  display: flex;
  align-items: center;
  gap: 5px;
  height: 29px;
  padding: 2px 0 0 6px;
  background: #e5e4e2;
}
.params {
  display: grid;
  grid-auto-rows: 1fr;
  height: 437px;
  margin-top: 6px;
  padding-left: 21px;
}
.params button { justify-content: flex-start; gap: 5px; font-size: 19px; }
.side-tabs { width: 28px; padding-top: 30px; }
.side-tabs button {
  width: 28px;
  height: 155px;
  border: 1px solid #999;
  border-top-width: 0;
  border-radius: 0 0 4px 0;
  background: #e4e3e1;
  color: #555;
}
.side-tabs .on {
  height: 156px;
  border-top-width: 1px;
  border-left-color: transparent;
  border-radius: 0 4px 4px 0;
  background: #efefef;
  color: #1c1c1c;
}
.side-tabs span {
  writing-mode: vertical-rl;
  text-orientation: sideways;
  transform: rotate(180deg);
}

/* Canvas */
.canvas { position: relative; flex: 1; background: #959595; }
.drawing { position: absolute; inset: 0; width: 100%; height: 100%; }
.axis { font: 15px "Liberation Sans", sans-serif; fill: #111; }

.cube {
  position: absolute;
  top: 14px;
  right: 17px;
  display: grid;
  justify-items: center;
  gap: 21px;
}
.cube text { font-size: 18px; text-anchor: middle; fill: #c4c4c4; }
.cube .top { font-size: 28px; fill: #777b80; }
.wcs {
  gap: 6px;
  width: 51px;
  height: 19px;
  border-radius: 5px;
  background: #c6c4cb;
  color: #666;
  font: 12px "Liberation Sans", sans-serif;
}

.navbar {
  position: absolute;
  top: 218px;
  right: 2px;
  display: flex;
  flex-direction: column;
  align-items: center;
  width: 38px;
  border: 2px solid #555;
  border-radius: 6px;
  background: #c3c3c1;
}
.navbar button { height: 30px; }
.navbar hr { width: 27px; height: 1px; margin: 1px 0; border: 0; background: #888; }
.navbar .nav-close { align-self: flex-end; height: 12px; }
.navbar .wheel { height: 37px; }
.navbar .motion { height: 34px; }
.navbar .nc { margin: 3px 0 2px; fill: #444; }
.navbar .nav-opt { align-self: flex-end; height: 16px; padding-right: 2px; }

.command {
  position: absolute;
  right: 86px;
  bottom: 1px;
  left: 84px;
  display: flex;
  height: 33px;
}
.cmd-tools {
  display: flex;
  align-items: center;
  gap: 9px;
  width: 70px;
  padding: 0 5px 0 4px;
  background: linear-gradient(#747474, #515151);
}
.cmd-tools .wrench { margin-left: auto; }
.cmd-field {
  display: flex;
  flex: 1;
  align-items: center;
  padding: 0 8px 0 7px;
  border-top: 1px solid #777;
  border-radius: 0 3px 3px 0;
  background: #e1e1df;
}
.cmd-field .cc { margin: 0 12px 0 3px; fill: #777; }
.cmd-field input {
  flex: 1;
  min-width: 0;
  padding: 0;
  border: 0;
  background: none;
  font-size: 20px;
}
.cmd-field input::placeholder { color: #909090; opacity: 1; }

/* Bottom bar */
.bottom {
  display: flex;
  justify-content: space-between;
  height: 39px;
  border-top: 1px solid #8f8f8f;
}
.layouts { display: flex; align-items: flex-start; padding-left: 10px; }
.layouts button {
  position: relative;
  width: 76px;
  height: 24px;
  margin-right: -4px;
  color: #666;
}
.layouts .on { z-index: 1; width: 70px; margin-right: -7px; color: #000; font-weight: 700; }
.layouts span { position: relative; }
.layouts .add { width: 30px; height: 22px; margin: 1px 0 0 8px; }
.status {
  display: flex;
  align-items: center;
  padding: 0 3px 3px 38px;
  background: #e8e7e5;
}
.coords { margin-right: 6px; font-size: 15px; color: #111; }
.model { width: 42px; font-weight: 700; color: #000; }
.t { width: 28px; height: 28px; }
.c { width: 22px; height: 28px; }
.g4 { margin-left: 4px; }
.g8 { margin-left: 8px; }
.scale { gap: 4px; width: 48px; }
.glow svg, .halo { filter: drop-shadow(0 0 3px #8fbcf5); }
```
